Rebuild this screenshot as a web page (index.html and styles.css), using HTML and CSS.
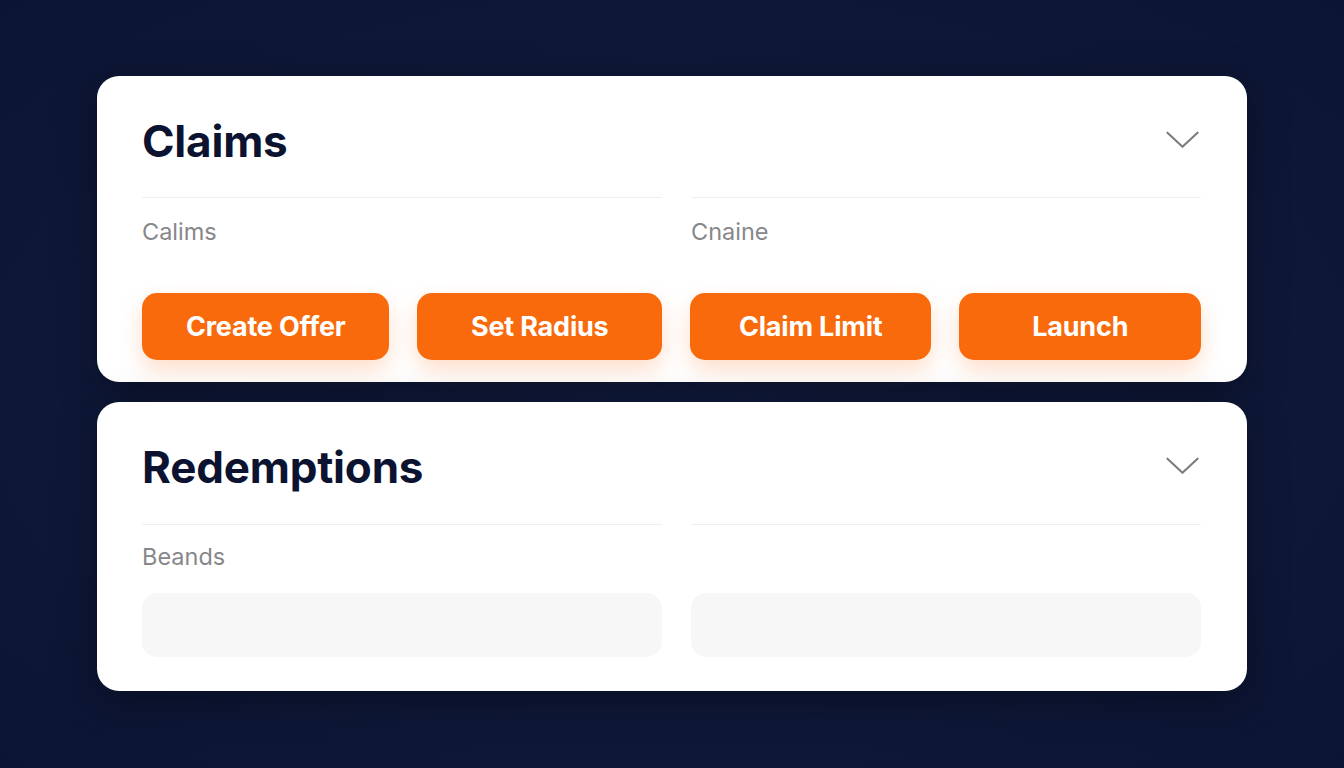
FILE: index.html
```html
<!DOCTYPE html>
<html lang="en">
<head>
    <meta charset="UTF-8">
    <meta name="viewport" content="width=device-width, initial-scale=1.0">
    <title>Claims &amp; Redemptions</title>
    <link rel="stylesheet" href="styles.css">
</head>
<body>
<div class="page">
    <!-- Claims -->
    <section class="card claims">
        <div class="card-head">
            <h2>Claims</h2>
            <svg class="chevron" viewBox="0 0 34 18" width="33" height="18">
                <polyline points="1.5,1.5 17,16 32.5,1.5" fill="none" stroke="#7c7c80" stroke-width="2.2" stroke-linecap="round" stroke-linejoin="round"/>
            </svg>
        </div>
        <div class="cols">
            <div class="col"><span class="label">Calims</span></div>
            <div class="col"><span class="label">Cnaine</span></div>
        </div>
        <div class="actions">
            <button class="btn">Create Offer</button>
            <button class="btn">Set Radius</button>
            <button class="btn">Claim Limit</button>
            <button class="btn">Launch</button>
        </div>
    </section>

    <!-- Redemptions -->
    <section class="card redemptions">
        <div class="card-head">
            <h2>Redemptions</h2>
            <svg class="chevron" viewBox="0 0 34 18" width="33" height="18">
                <polyline points="1.5,1.5 17,16 32.5,1.5" fill="none" stroke="#7c7c80" stroke-width="2.2" stroke-linecap="round" stroke-linejoin="round"/>
            </svg>
        </div>
        <div class="cols">
            <div class="col">
                <span class="label">Beands</span>
                <div class="field"></div>
            </div>
            <div class="col">
                <span class="label">&nbsp;</span>
                <div class="field"></div>
            </div>
        </div>
    </section>
</div>
</body>
</html>
```

FILE: styles.css
```css
* {
    margin: 0;
    padding: 0;
    box-sizing: border-box;
}

body {
    font-family: Inter, 'Noto Sans', Arial, sans-serif;
    background: radial-gradient(ellipse at center, #101c40 0%, #0e1838 60%, #0b1433 100%);
    width: 1344px;
    height: 768px;
    overflow: hidden;
}

.page {
    padding: 76px 97px 0;
    display: flex;
    flex-direction: column;
    gap: 20px;
}

.card {
    background: #fff;
    border-radius: 22px;
    padding: 0 46px 0 45px;
    box-shadow: 0 10px 40px rgba(0, 0, 0, 0.35);
}

.claims {
    height: 306px;
}

.redemptions {
    height: 289px;
}

.card-head {
    height: 121px;
    display: flex;
    align-items: center;
    justify-content: space-between;
    padding-top: 8px;
}

.redemptions .card-head {
    height: 122px;
}

.card-head h2 {
    font-size: 44px;
    font-weight: 700;
    color: #0c1330;
    letter-spacing: -0.2px;
}

.chevron {
    margin-right: 2px;
    margin-top: -2px;
}

.cols {
    display: grid;
    grid-template-columns: 520fr 510fr;
    gap: 29px;
}

.col {
    border-top: 1px solid #efefef;
    padding-top: 19px;
    display: flex;
    flex-direction: column;
}

.redemptions .col {
    padding-top: 17px;
}

.label {
    font-size: 23.5px;
    line-height: 30px;
    color: #878789;
    font-weight: 400;
}

.actions {
    display: grid;
    grid-template-columns: 248fr 245fr 242fr 242fr;
    gap: 28px;
    margin-top: 46px;
}

.btn {
    height: 67px;
    border: none;
    border-radius: 15px;
    background: #f96a0c;
    color: #fff;
    font-family: Inter, 'Noto Sans', Arial, sans-serif;
    font-size: 27px;
    font-weight: 700;
    letter-spacing: -0.2px;
    box-shadow: 0 10px 22px rgba(249, 106, 12, 0.22);
}

.field {
    margin-top: 21px;
    height: 64px;
    border-radius: 15px;
    background: #f7f7f7;
}
```
